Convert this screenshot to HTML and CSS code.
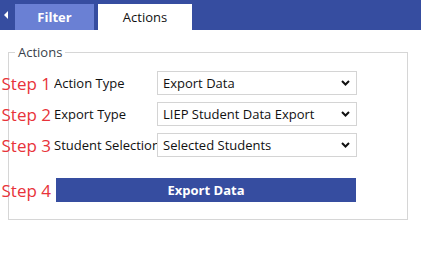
FILE: index.html
```html
<!DOCTYPE html>
<html lang="en">
<head>
    <meta charset="UTF-8">
    <title>Actions</title>
    <link rel="stylesheet" href="styles.css">
</head>
<body>
    <div class="topbar">
        <div class="collapse">
            <svg width="5" height="8" viewBox="0 0 5 8"><path d="M4 0 L0 4 L4 8 Z" fill="#fff"/></svg>
        </div>
        <div class="tab tab-filter">Filter</div>
        <div class="tab tab-active">Actions</div>
    </div>

    <fieldset class="panel">
        <legend>Actions</legend>

        <div class="row">
            <div class="step"><span>Step 1</span></div>
            <label class="field-label">Action Type</label>
            <div class="select-box">
                <span>Export Data</span>
                <svg class="chev" width="9" height="6" viewBox="0 0 9 6"><path d="M1 1 L4.5 4.5 L8 1" fill="none" stroke="#111" stroke-width="2"/></svg>
            </div>
        </div>

        <div class="row">
            <div class="step"><span>Step 2</span></div>
            <label class="field-label">Export Type</label>
            <div class="select-box">
                <span>LIEP Student Data Export</span>
                <svg class="chev" width="9" height="6" viewBox="0 0 9 6"><path d="M1 1 L4.5 4.5 L8 1" fill="none" stroke="#111" stroke-width="2"/></svg>
            </div>
        </div>

        <div class="row">
            <div class="step"><span>Step 3</span></div>
            <label class="field-label">Student Selection</label>
            <div class="select-box">
                <span>Selected Students</span>
                <svg class="chev" width="9" height="6" viewBox="0 0 9 6"><path d="M1 1 L4.5 4.5 L8 1" fill="none" stroke="#111" stroke-width="2"/></svg>
            </div>
        </div>

        <div class="row row-button">
            <div class="step"><span>Step 4</span></div>
            <button class="export-btn">Export Data</button>
        </div>
    </fieldset>
</body>
</html>
```

FILE: styles.css
```css
body {
    margin: 0;
    font-family: "Open Sans", "Liberation Sans", sans-serif;
    background: #fff;
    color: #111;
}
.topbar {
    height: 30px;
    background: #364da0;
    display: flex;
    align-items: flex-end;
}
.collapse {
    width: 15px;
    height: 30px;
    display: flex;
    align-items: center;
    padding-left: 4px;
    box-sizing: border-box;
}
.tab {
    height: 26px;
    display: flex;
    align-items: center;
    justify-content: center;
    font-size: 13px;
}
.tab-filter {
    width: 79px;
    background: #6a80d4;
    color: #fff;
    font-weight: bold;
}
.tab-active {
    width: 94px;
    margin-left: 4px;
    background: #fff;
    color: #111;
}
.panel {
    margin: 13px 0 0 8px;
    width: 400px;
    height: 177px;
    box-sizing: border-box;
    border: 1px solid #d6d6d6;
    padding: 10px 0 0 0;
}
.panel legend {
    margin-left: 6px;
    padding: 0 3px;
    font-size: 13px;
    color: #3a3f4b;
}
.row {
    display: flex;
    align-items: center;
    height: 24px;
    margin-bottom: 7px;
}
.row-button {
    margin-top: 21px;
}
.step {
    width: 42px;
    flex: none;
    display: flex;
    justify-content: flex-end;
    white-space: nowrap;
    color: #e8333a;
    font-size: 17px;
}
.field-label {
    width: 103px;
    margin-left: 3px;
    flex: none;
    overflow: hidden;
    white-space: nowrap;
    font-size: 13px;
}
.select-box {
    width: 200px;
    height: 24px;
    box-sizing: border-box;
    border: 1px solid #d4d4d4;
    display: flex;
    align-items: center;
    justify-content: space-between;
    padding: 0 6px 0 5px;
    font-size: 13px;
}
.export-btn {
    width: 300px;
    height: 24px;
    margin-left: 5px;
    border: none;
    background: #364da0;
    color: #fff;
    font-family: inherit;
    font-size: 13px;
    font-weight: bold;
}
```
